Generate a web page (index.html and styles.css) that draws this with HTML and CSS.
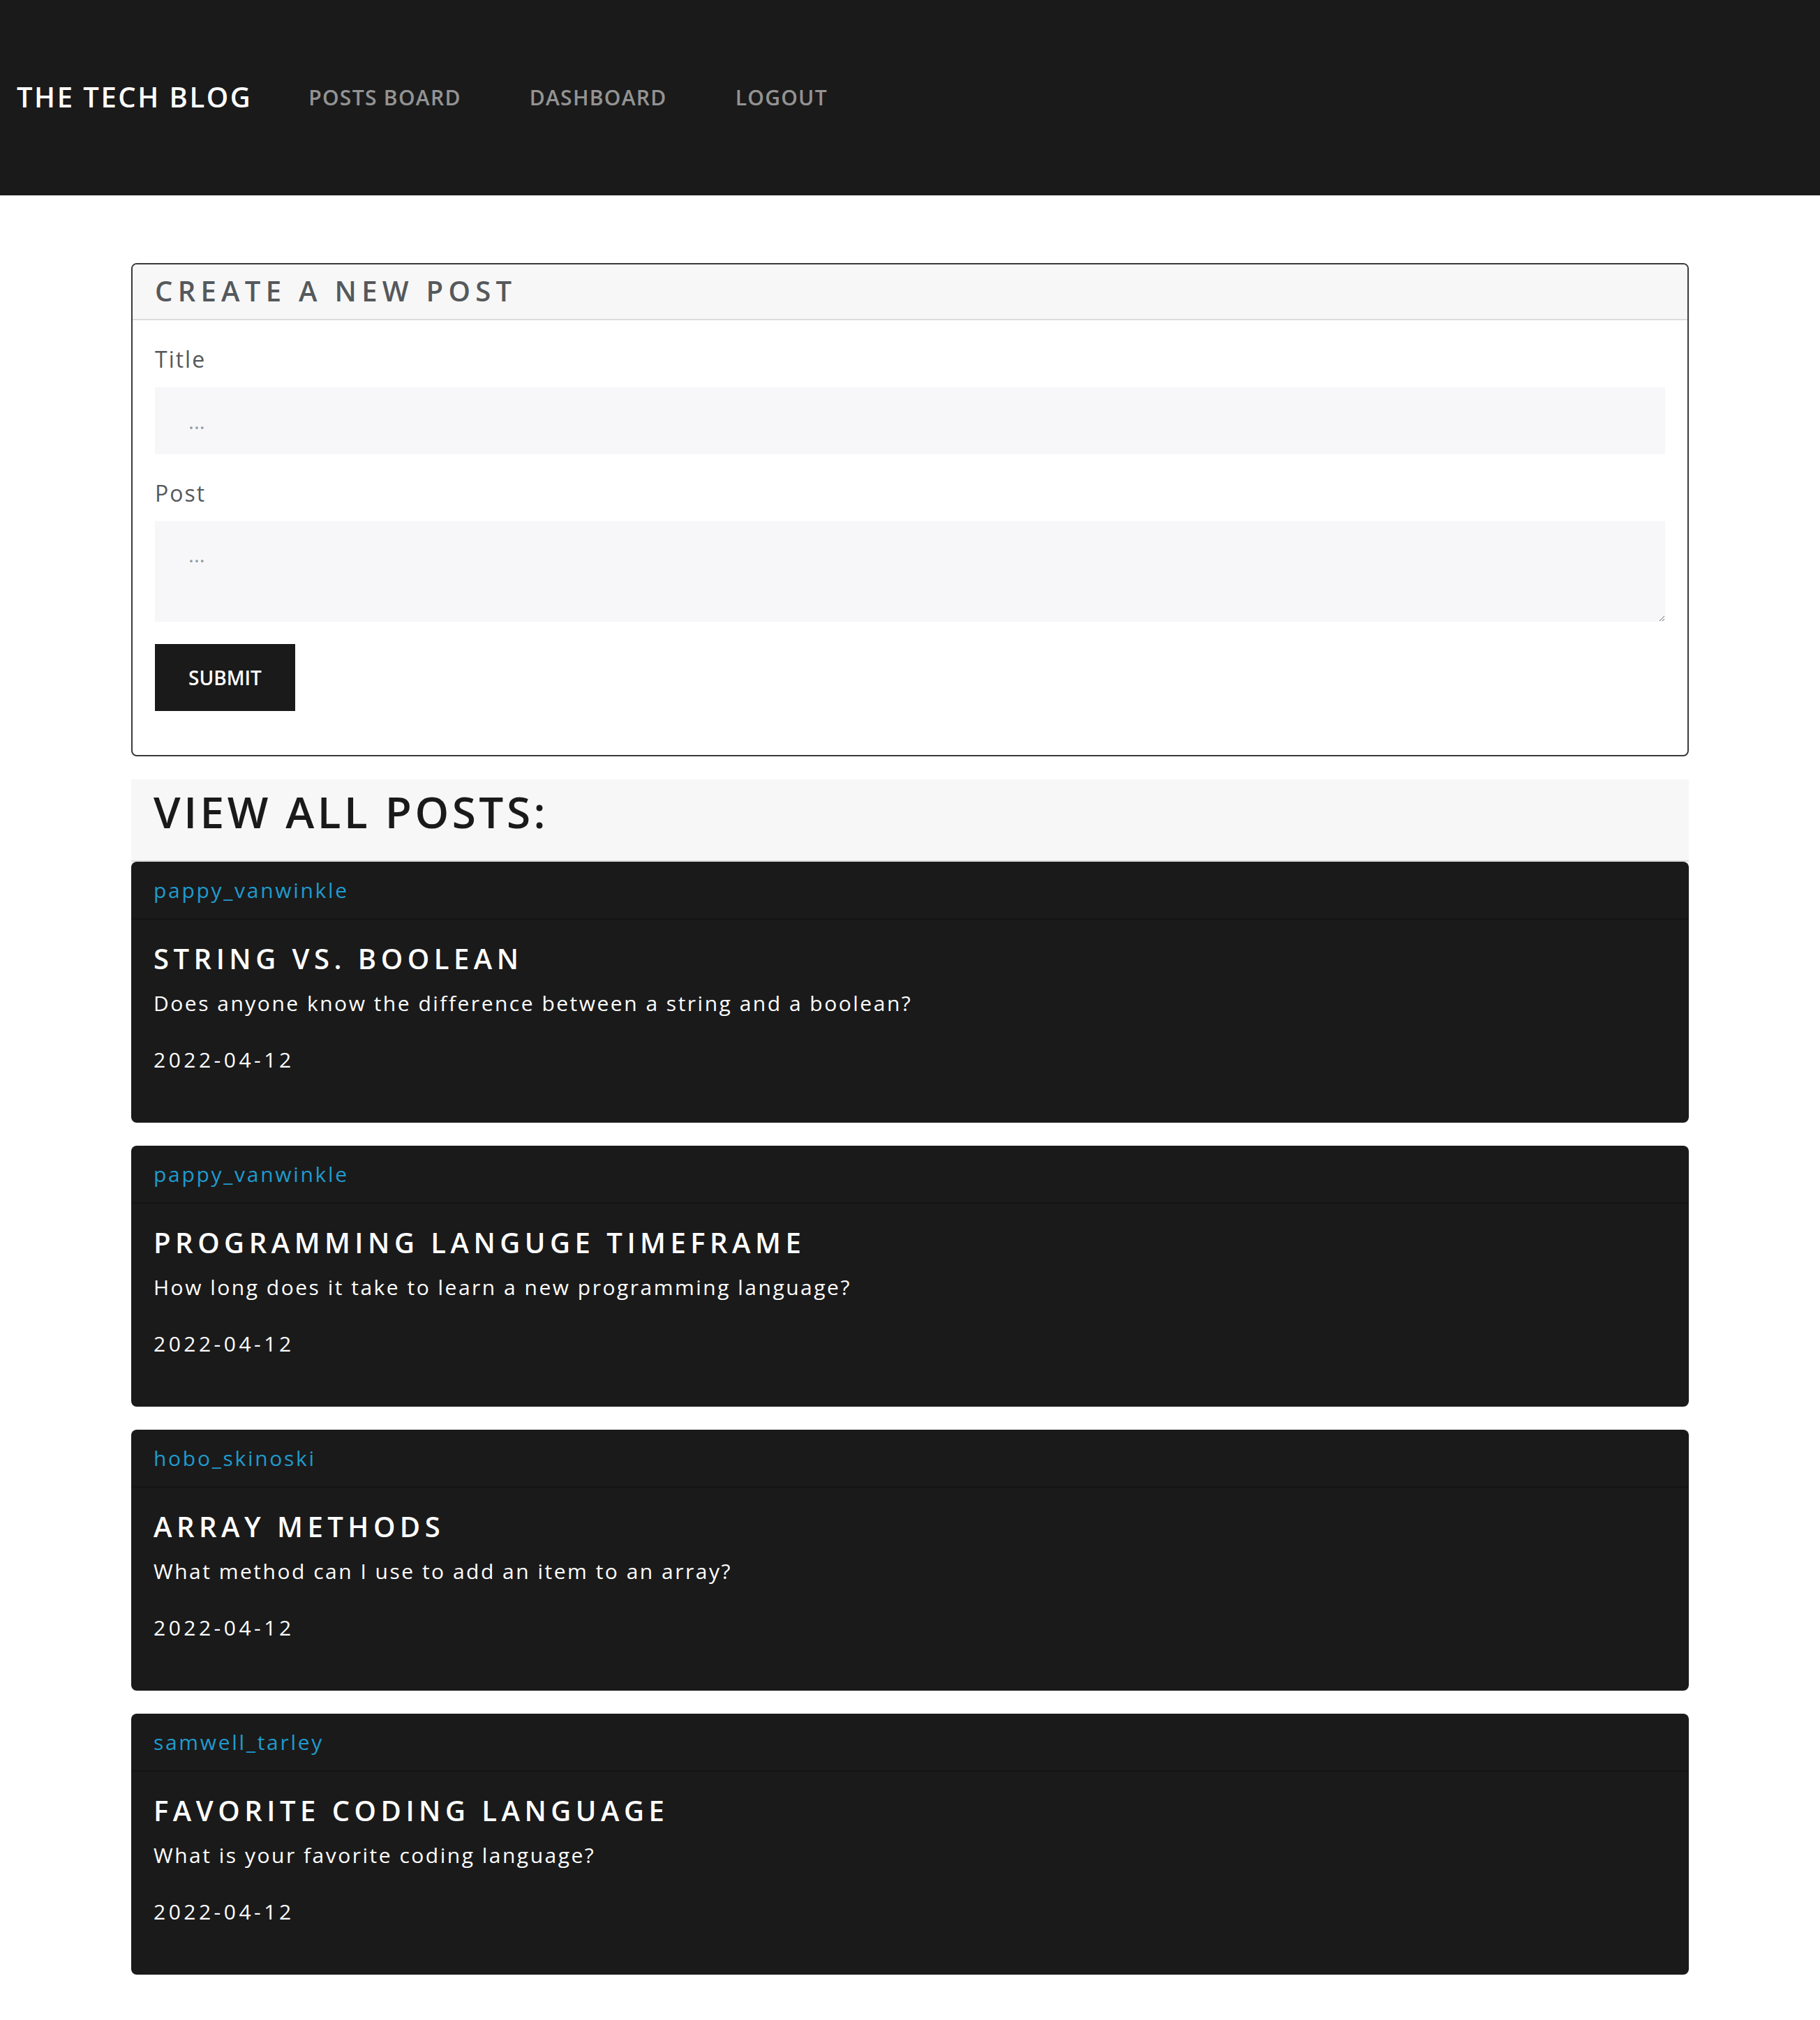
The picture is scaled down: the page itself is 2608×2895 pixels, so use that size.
FILE: index.html
```html
<!DOCTYPE html>
<html lang="en">
<head>
<meta charset="utf-8">
<title>The Tech Blog</title>
<link rel="stylesheet" href="styles.css">
</head>
<body>
<nav class="navbar">
  <a class="brand" href="#">The Tech Blog</a>
  <ul class="nav-links">
    <li><a class="nav-link" href="#">Posts Board</a></li>
    <li><a class="nav-link" href="#">Dashboard</a></li>
    <li><a class="nav-link" href="#">Logout</a></li>
  </ul>
</nav>

<main class="container">
  <section class="form-card">
    <h4 class="form-card-header">Create a new post</h4>
    <form class="form-card-body">
      <div class="form-group">
        <label class="form-label" for="title">Title</label>
        <input class="form-control" id="title" type="text" placeholder="...">
      </div>
      <div class="form-group">
        <label class="form-label" for="post">Post</label>
        <textarea class="form-control form-textarea" id="post" placeholder="..."></textarea>
      </div>
      <div class="form-actions">
        <button class="btn" type="submit">Submit</button>
      </div>
    </form>
  </section>

  <div class="posts-header">
    <h2 class="posts-title">View all posts:</h2>
  </div>

  <article class="post-card">
    <div class="post-header"><a class="post-author" href="#">pappy_vanwinkle</a></div>
    <div class="post-body">
      <h5 class="post-title">String vs. Boolean</h5>
      <p class="post-text">Does anyone know the difference between a string and a boolean?</p>
      <p class="post-date">2022-04-12</p>
    </div>
  </article>

  <article class="post-card">
    <div class="post-header"><a class="post-author" href="#">pappy_vanwinkle</a></div>
    <div class="post-body">
      <h5 class="post-title">Programming Languge Timeframe</h5>
      <p class="post-text">How long does it take to learn a new programming language?</p>
      <p class="post-date">2022-04-12</p>
    </div>
  </article>

  <article class="post-card">
    <div class="post-header"><a class="post-author" href="#">hobo_skinoski</a></div>
    <div class="post-body">
      <h5 class="post-title">Array Methods</h5>
      <p class="post-text">What method can I use to add an item to an array?</p>
      <p class="post-date">2022-04-12</p>
    </div>
  </article>

  <article class="post-card">
    <div class="post-header"><a class="post-author" href="#">samwell_tarley</a></div>
    <div class="post-body">
      <h5 class="post-title">Favorite Coding Language</h5>
      <p class="post-text">What is your favorite coding language?</p>
      <p class="post-date">2022-04-12</p>
    </div>
  </article>
</main>
</body>
</html>
```
FILE: styles.css
```css
* { box-sizing: border-box; }

html, body { margin: 0; padding: 0; }

body {
  font-family: "Open Sans", "Noto Sans", Lato, sans-serif;
  font-size: 30px;
  line-height: 48px;
  color: #55595c;
  background: #fff;
}

a { text-decoration: none; }

/* Navbar */
.navbar {
  height: 280px;
  background: #1a1a1a;
  display: flex;
  align-items: center;
  padding: 0 24px;
}

.brand {
  color: #fff;
  font-size: 40px;
  font-weight: 600;
  letter-spacing: 2.5px;
  text-transform: uppercase;
  line-height: 48px;
  margin-right: 32px;
  position: relative;
  top: -1px;
}

.nav-links {
  display: flex;
  list-style: none;
  margin: 0;
  padding: 0;
}

.nav-link {
  display: block;
  padding: 0 49px;
  color: rgba(255, 255, 255, 0.55);
  font-size: 30px;
  font-weight: 600;
  letter-spacing: 1.3px;
  text-transform: uppercase;
  line-height: 48px;
}

/* Container */
.container {
  max-width: 2280px;
  margin: 0 auto;
  padding: 97px 24px 36px;
}

/* Form card */
.form-card {
  border: 2px solid #3a3a3a;
  border-radius: 8px;
  overflow: hidden;
  margin-bottom: 33px;
}

.form-card-header {
  margin: 0;
  background: #f7f7f7;
  border-bottom: 2px solid #dcdcdc;
  padding: 14px 32px 16px;
  font-size: 40px;
  line-height: 48px;
  font-weight: 600;
  letter-spacing: 7.3px;
  text-transform: uppercase;
  color: #55595c;
}

.form-card-body {
  padding: 32px 32px 31px;
}

.form-group {
  margin-bottom: 32px;
}

.form-label {
  display: block;
  font-size: 32px;
  line-height: 48px;
  letter-spacing: 2px;
  color: #55595c;
  margin-bottom: 16px;
}

.form-control {
  display: block;
  width: 100%;
  height: 96px;
  border: 0;
  border-radius: 0;
  background: #f7f7f9;
  padding: 0 48px;
  font-family: inherit;
  font-size: 30px;
  line-height: 48px;
  color: #55595c;
  outline: none;
}

.form-control::placeholder {
  color: #919aa1;
}

.form-textarea {
  height: 144px;
  padding: 24px 48px;
  resize: vertical;
}

.form-actions {
  margin-bottom: 32px;
}

.btn {
  display: inline-block;
  height: 96px;
  padding: 0 48px;
  border: 0;
  border-radius: 0;
  background: #1a1a1a;
  color: #fff;
  font-family: inherit;
  font-size: 28px;
  font-weight: 600;
  text-transform: uppercase;
  line-height: 96px;
  cursor: pointer;
}

/* Posts header */
.posts-header {
  background: #f7f7f7;
  border-bottom: 2px solid #dcdcdc;
  padding: 9px 32px 33px;
}

.posts-title {
  margin: 0;
  font-size: 62px;
  line-height: 74px;
  font-weight: 600;
  letter-spacing: 4.5px;
  text-transform: uppercase;
  color: #1a1a1a;
}

/* Post cards */
.post-card {
  background: #1a1a1a;
  border-radius: 8px;
  margin-bottom: 33px;
  color: #fff;
}

.post-header {
  padding: 17px 32px 16px;
  border-bottom: 2px solid rgba(0, 0, 0, 0.2);
}

.post-author {
  color: #1f9bcf;
  font-size: 30px;
  letter-spacing: 2.7px;
}

.post-body {
  padding: 32px 32px 33px;
}

.post-title {
  margin: 0 0 16px;
  font-size: 40px;
  line-height: 48px;
  font-weight: 600;
  letter-spacing: 6.5px;
  text-transform: uppercase;
  color: #fff;
}

.post-text {
  margin: 0 0 33px;
  font-size: 30px;
  letter-spacing: 2.5px;
}

.post-date {
  margin: 0 0 33px;
  font-size: 30px;
  letter-spacing: 4.5px;
}
```
